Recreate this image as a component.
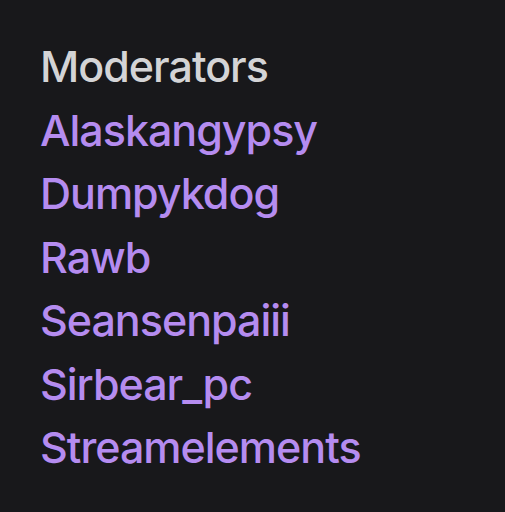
const mods = ['Alaskangypsy', 'Dumpykdog', 'Rawb', 'Seansenpaiii', 'Sirbear_pc', 'Streamelements']

export default function App() {
    return (
        <div className="w-[505px] h-[512px] bg-[#18181b] pl-[40px] pt-[35px] font-['Inter',sans-serif] text-[43px] leading-[63.5px] tracking-[-1px]">
            <div className="text-[#d4d4d6] font-medium">Moderators</div>
            {mods.map(name => (
                <div key={name} className="text-[#b58cf0] font-medium">{name}</div>
            ))}
        </div>
    )
}
